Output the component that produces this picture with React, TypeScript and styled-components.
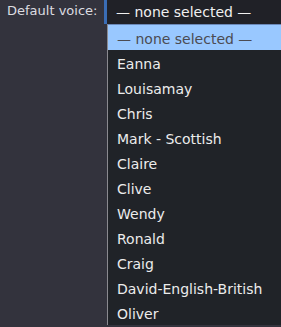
import React from "react";
import styled, { createGlobalStyle } from "styled-components";

const Global = createGlobalStyle`
  html, body { margin: 0; padding: 0; background: #33333d; }
  body { font-family: "DejaVu Sans", Verdana, sans-serif; font-size: 13px; color: #e6e6e6; overflow: hidden; }
`;

const Row = styled.div`
  display: flex;
  align-items: flex-start;
  height: 327px;
`;

const Label = styled.div`
  width: 104px;
  padding: 3px 0 0 7px;
  box-sizing: border-box;
  line-height: 16px;
  color: #dcdce0;
`;

const SelectCol = styled.div`
  flex: 1;
  display: flex;
  flex-direction: column;
  font-size: 14px;
`;

const Select = styled.div`
  height: 24px;
  box-sizing: border-box;
  background: #202127;
  border-left: 3px solid #3a6db5;
  padding: 4px 0 0 9px;
  line-height: 16px;
  color: #f0f0f0;
`;

const List = styled.div`
  flex: 1;
  margin-left: 3px;
  background: #202328;
  border-left: 1px solid #8a8a90;
  border-top: 1px solid #6a88b8;
  display: flex;
  flex-direction: column;
`;

const Option = styled.div<{ $active?: boolean }>`
  height: 25px;
  box-sizing: border-box;
  padding: 6px 0 0 9px;
  line-height: 16px;
  background: ${(p) => (p.$active ? "#99c8ff" : "transparent")};
  color: ${(p) => (p.$active ? "#4b4b52" : "#ececec")};
`;

const voices = [
  "Eanna",
  "Louisamay",
  "Chris",
  "Mark - Scottish",
  "Claire",
  "Clive",
  "Wendy",
  "Ronald",
  "Craig",
  "David-English-British",
  "Oliver",
];

export default function App() {
  return (
    <>
      <Global />
      <Row>
        <Label>Default voice:</Label>
        <SelectCol>
          <Select>— none selected —</Select>
          <List>
            <Option $active>— none selected —</Option>
            {voices.map((v) => (
              <Option key={v}>{v}</Option>
            ))}
          </List>
        </SelectCol>
      </Row>
    </>
  );
}
